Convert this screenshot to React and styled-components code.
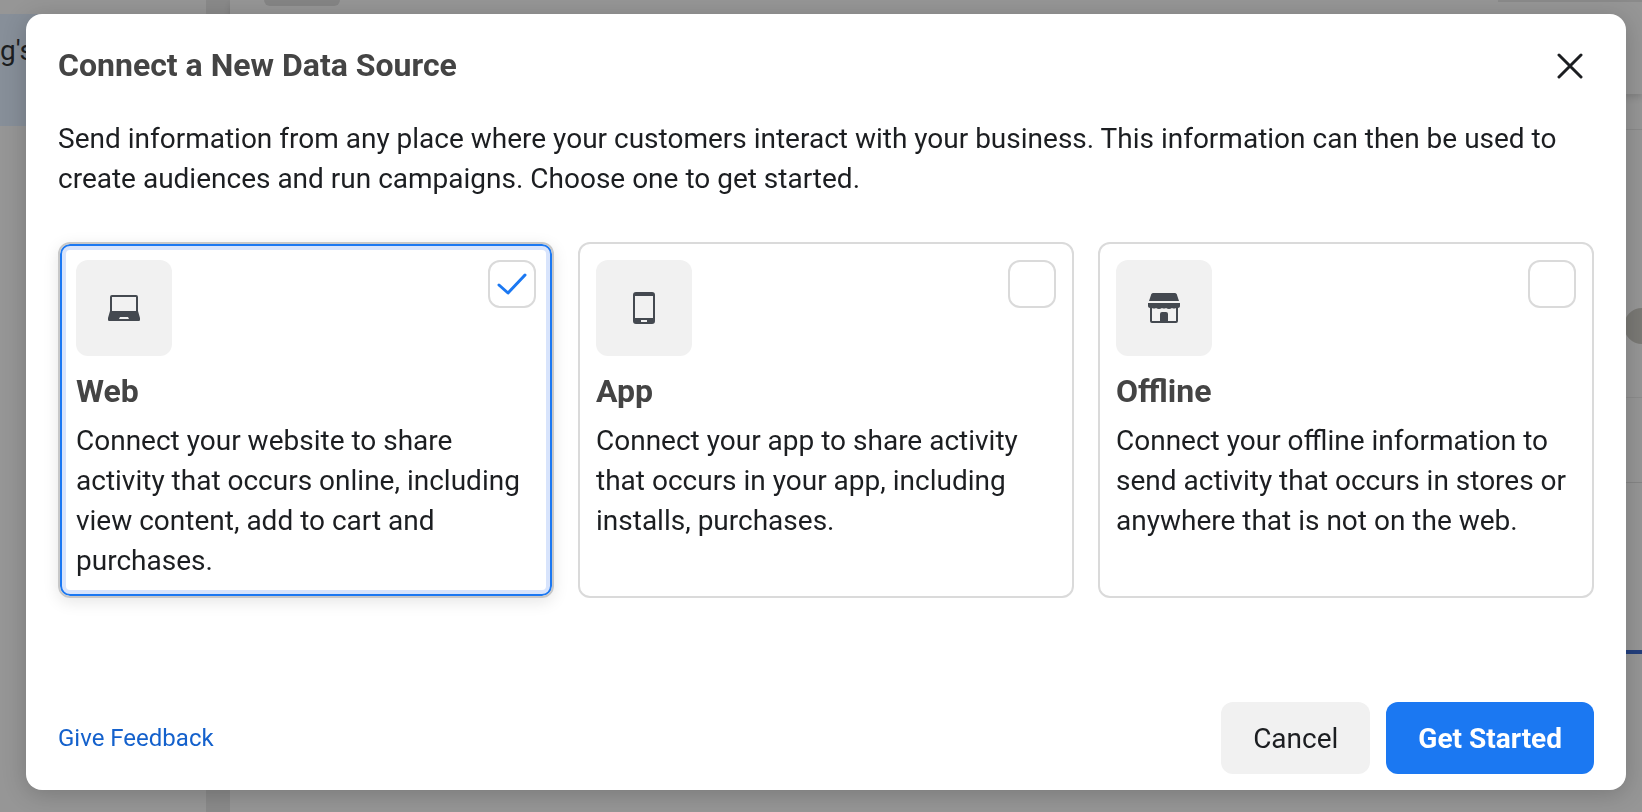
import { useState } from "react";
import styled, { createGlobalStyle } from "styled-components";

const WebIcon = () => (
  <svg width="32" height="32" viewBox="0 0 32 32" aria-hidden="true">
    <path
      fill="#444950"
      fillRule="evenodd"
      d="M4 3h24a2 2 0 0 1 2 2v14l2 7a2 2 0 0 1-2 3H2a2 2 0 0 1-2-3l2-7V5a2 2 0 0 1 2-2zm0 2v14h24V5zM12 25l-1 2h10l-1-2z"
    />
  </svg>
);

const AppIcon = () => (
  <svg width="32" height="32" viewBox="0 0 32 32" aria-hidden="true">
    <path
      fill="#444950"
      fillRule="evenodd"
      d="M8 0h16a3 3 0 0 1 3 3v26a3 3 0 0 1-3 3H8a3 3 0 0 1-3-3V3a3 3 0 0 1 3-3zM7 4v22h18V4zM13 28v2h6v-2z"
    />
  </svg>
);

const OfflineIcon = () => (
  <svg width="32" height="32" viewBox="0 0 32 32" aria-hidden="true">
    <path
      fill="#444950"
      d="M5 1h22c1 0 2 1 2 2l2 6H1l2-6c0-1 1-2 2-2zM0 11h32v3c0 1-1 2-2 2v13a2 2 0 0 1-2 2H4a2 2 0 0 1-2-2V16c-1 0-2-1-2-2z"
    />
    <path
      fill="#f1f1f1"
      d="M4 16q2 1 4-0q3 2 6 0q2 1 4 0q3 2 6 0q2 1 4 0v13h-8v-7a2 2 0 0 0-2-2h-4a2 2 0 0 0-2 2v7H4z"
    />
  </svg>
);

const sources = [
  {
    id: "web",
    title: "Web",
    icon: <WebIcon />,
    description:
      "Connect your website to share activity that occurs online, including view content, add to cart and purchases.",
  },
  {
    id: "app",
    title: "App",
    icon: <AppIcon />,
    description:
      "Connect your app to share activity that occurs in your app, including installs, purchases.",
  },
  {
    id: "offline",
    title: "Offline",
    icon: <OfflineIcon />,
    description:
      "Connect your offline information to send activity that occurs in stores or anywhere that is not on the web.",
  },
];

const App = () => {
  const [selected, setSelected] = useState("web");

  return (
    <>
      <GlobalStyle />
      <Page>
        <Sidebar>
          <SidebarItem>g's</SidebarItem>
        </Sidebar>
        <Main>
          <TopBar>
            <Pill />
            <TopBarAction />
          </TopBar>
          <Content>
            <Avatar />
            <Divider $height="54px" $color="#8c8c8c" />
            <Divider $height="85px" $color="#858585" />
            <ActiveLine />
          </Content>
        </Main>
      </Page>

      <Overlay>
        <Modal role="dialog" aria-modal="true" aria-labelledby="modalTitle">
          <Header>
            <Title id="modalTitle">Connect a New Data Source</Title>
            <CloseButton type="button" aria-label="Close">
              <svg width="26" height="26" viewBox="0 0 26 26">
                <path
                  d="M2 2l22 22M24 2L2 24"
                  stroke="#1c1e21"
                  strokeWidth="3"
                  strokeLinecap="round"
                />
              </svg>
            </CloseButton>
          </Header>

          <Intro>
            Send information from any place where your customers interact with
            your business. This information can then be used to create audiences
            and run campaigns. Choose one to get started.
          </Intro>

          <Cards>
            {sources.map((source) => (
              <Card
                key={source.id}
                htmlFor={source.id}
                $selected={selected === source.id}
              >
                <CardTop>
                  <IconBox>{source.icon}</IconBox>
                  <CheckboxWrapper>
                    <Checkbox
                      type="checkbox"
                      id={source.id}
                      checked={selected === source.id}
                      onChange={() => setSelected(source.id)}
                    />
                    {selected === source.id && (
                      <svg width="30" height="22" viewBox="0 0 30 22">
                        <path
                          d="M2 12l9 8L28 2"
                          fill="none"
                          stroke="#1b78f2"
                          strokeWidth="3"
                          strokeLinecap="round"
                          strokeLinejoin="round"
                        />
                      </svg>
                    )}
                  </CheckboxWrapper>
                </CardTop>
                <CardTitle>{source.title}</CardTitle>
                <CardText>{source.description}</CardText>
              </Card>
            ))}
          </Cards>

          <Footer>
            <FeedbackLink href="#feedback">Give Feedback</FeedbackLink>
            <Buttons>
              <Button type="button">Cancel</Button>
              <Button type="button" $primary>
                Get Started
              </Button>
            </Buttons>
          </Footer>
        </Modal>
      </Overlay>
    </>
  );
};

export default App;

const GlobalStyle = createGlobalStyle`
  body {
    margin: 0;
    overflow: hidden;
    background-color: #969696;
    color: #1c1e21;
    font-family: Roboto, sans-serif;
    font-size: 28px;
    line-height: 40px;
  }

  * {
    box-sizing: border-box;
  }
`;

const Page = styled.div`
  height: 100vh;
  display: grid;
  grid-template-columns: 206px 1fr;
`;

const Sidebar = styled.div`
  padding-top: 14px;
`;

const SidebarItem = styled.div`
  height: 112px;
  padding-top: 17px;
  background-color: #878f99;
`;

const Main = styled.div`
  border-left: 24px solid #8a8a8a;
`;

const TopBar = styled.div`
  height: 94px;
  display: flex;
  justify-content: space-between;
  align-items: flex-start;
  padding-left: 34px;
  box-shadow: 0 4px 6px rgba(0, 0, 0, 0.12);
`;

const Pill = styled.div`
  width: 76px;
  height: 6px;
  border-radius: 0 0 16px 16px;
  background-color: #858585;
`;

const TopBarAction = styled.div`
  width: 144px;
  height: 2px;
  background-color: #8a8a8a;
`;

const Content = styled.div`
  display: flex;
  flex-direction: column;
  align-items: flex-end;
  margin-top: 35px;
  padding-top: 178px;
  border-top: 1px solid #8a8a8a;
`;

const Avatar = styled.div`
  width: 18px;
  height: 36px;
  border-radius: 18px 0 0 18px;
  background-color: #7a7975;
`;

const Divider = styled.div`
  width: 100%;
  height: ${(props) => props.$height};
  border-bottom: 1px solid ${(props) => props.$color};
`;

const ActiveLine = styled.div`
  width: 100%;
  height: 4px;
  margin-top: 167px;
  background-color: #233f7d;
`;

const Overlay = styled.div`
  position: fixed;
  inset: 0;
  display: flex;
  align-items: flex-start;
  padding: 14px 16px 0 26px;
`;

const Modal = styled.div`
  flex: 1;
  padding: 31px 32px 16px;
  border-radius: 16px;
  background-color: #ffffff;
  box-shadow: 0 4px 24px rgba(0, 0, 0, 0.2);
`;

const Header = styled.div`
  display: flex;
  justify-content: space-between;
  align-items: flex-start;
`;

const Title = styled.h2`
  margin: 0;
  color: #444444;
  font-size: 32px;
  font-weight: 700;
  line-height: 40px;
`;

const CloseButton = styled.button`
  display: flex;
  padding: 8px;
  border: 0;
  margin-right: 3px;
  background: none;
  cursor: pointer;
`;

const Intro = styled.p`
  margin: 32px 0 43px;
`;

const Cards = styled.div`
  display: grid;
  grid-template-columns: repeat(3, 1fr);
  gap: 24px;
`;

const Card = styled.label`
  display: block;
  padding: 16px 16px 15px;
  border: 2px solid ${(props) => (props.$selected ? "#c8c8c8" : "#dadada")};
  border-radius: 12px;
  box-shadow: ${(props) =>
    props.$selected
      ? "inset 0 0 0 2px #1b78f2, inset 0 0 0 6px #d8e4fc, 0 4px 16px rgba(0, 0, 0, 0.1)"
      : "none"};
  cursor: pointer;
`;

const CardTop = styled.div`
  display: flex;
  justify-content: space-between;
  align-items: flex-start;
`;

const IconBox = styled.div`
  width: 96px;
  height: 96px;
  display: flex;
  justify-content: center;
  align-items: center;
  border-radius: 12px;
  background-color: #f1f1f1;
`;

const CheckboxWrapper = styled.div`
  display: grid;
  place-items: center;

  > * {
    grid-area: 1 / 1;
  }

  svg {
    pointer-events: none;
  }
`;

const Checkbox = styled.input`
  width: 48px;
  height: 48px;
  margin: 0;
  appearance: none;
  border: 2px solid #dadada;
  border-radius: 12px;
  cursor: pointer;
`;

const CardTitle = styled.h3`
  margin: 15px 0 10px;
  color: #444444;
  font-size: 32px;
  font-weight: 700;
  line-height: 40px;
`;

const CardText = styled.p`
  margin: 0;
`;

const Footer = styled.div`
  display: flex;
  justify-content: space-between;
  align-items: center;
  margin-top: 104px;
`;

const FeedbackLink = styled.a`
  color: #1461cc;
  font-size: 24px;
  text-decoration: none;
`;

const Buttons = styled.div`
  display: flex;
  gap: 16px;
`;

const Button = styled.button`
  padding: 17px 32px 15px;
  border: 0;
  border-radius: 12px;
  background-color: ${(props) => (props.$primary ? "#1b78f2" : "#f1f1f1")};
  color: ${(props) => (props.$primary ? "#ffffff" : "#1c1e21")};
  font-family: inherit;
  font-size: 28px;
  font-weight: ${(props) => (props.$primary ? 700 : 400)};
  line-height: 40px;
  cursor: pointer;
`;
